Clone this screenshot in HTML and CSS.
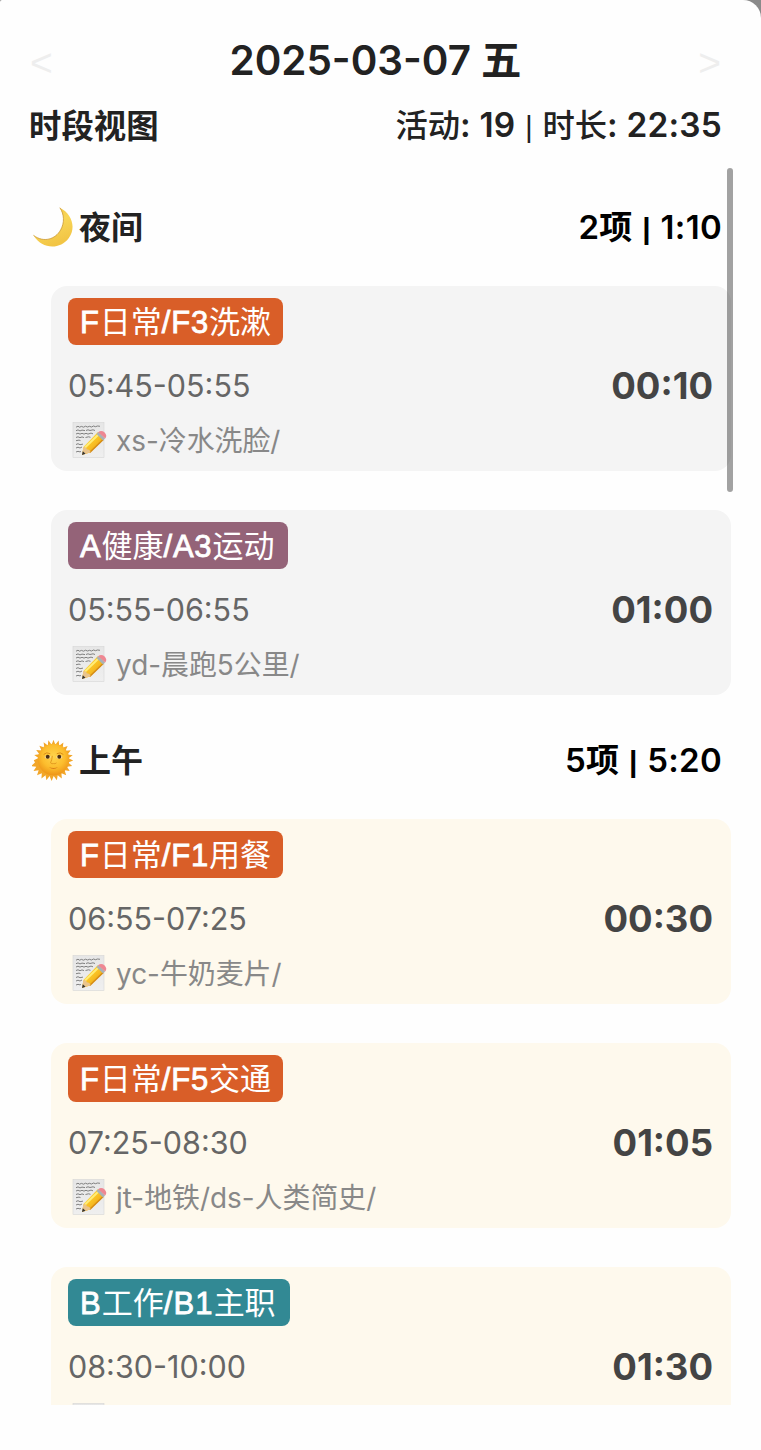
FILE: index.html
```html
<!DOCTYPE html>
<html lang="zh-CN">

<head>
    <meta charset="utf-8" />
    <title>时段视图</title>
    <link rel="stylesheet" href="styles.css">
</head>

<body>
    <svg class="icon-defs">
        <defs>
            <linearGradient id="paperFill" x1="0" y1="0" x2="0" y2="1">
                <stop offset="0" stop-color="#e6e6e6" />
                <stop offset="1" stop-color="#efefef" />
            </linearGradient>
            <linearGradient id="pencilFill" x1="0" y1="0" x2="1" y2="1">
                <stop offset="0" stop-color="#ffdf45" />
                <stop offset="0.5" stop-color="#f9c023" />
                <stop offset="1" stop-color="#d98a12" />
            </linearGradient>
            <linearGradient id="moonFill" x1="0" y1="0" x2="0.4" y2="1">
                <stop offset="0" stop-color="#f0bd3c" />
                <stop offset="0.5" stop-color="#f8d658" />
                <stop offset="1" stop-color="#f2c545" />
            </linearGradient>
            <radialGradient id="sunFill" cx="0.5" cy="0.4" r="0.6">
                <stop offset="0" stop-color="#ffd44c" />
                <stop offset="0.6" stop-color="#fcbd2d" />
                <stop offset="1" stop-color="#ee9518" />
            </radialGradient>
        </defs>
        <symbol id="memo" viewBox="0 0 36 36">
            <rect x="1" y="0.5" width="31" height="35" fill="url(#paperFill)" stroke="#d5d5d5" stroke-width="0.6" />
            <path d="M4 5.200l2-1 1.500 1 2-.8 2 .8 2-1 2 .8 2-.7 2 .7 2-1 2 .7 2-.7 2.500.3M4 8.700l2-.8 2 1 2-.8 3 .5M14 8.500l2-.7 2 .7 3-.7 2 .7M4 12l2-.8 2 .9 2-.8 2 .8 2-.8 2 .8 3-1 2 .7M4 15.500l2-.7 2 .9 2-.8 2 .7M13.500 15.500l3-.7 2 .5M4 18.700l3-.6 1.500.5M4 22.500l2-.8 2 1 3-.6M4 26l2-.8 2 .8 2-1M4 30l2-.7 2 .6 1-.5" fill="none" stroke="#757575" stroke-width="0.9" />
            <path d="M10 33l1.500-8 14.500-15 6.500 6.500-14.500 14z" fill="url(#pencilFill)" />
            <path d="M13 25.500l13.500-13" stroke="#ffed76" stroke-width="2" />
            <path d="M17.700 30.500l13.500-13" stroke="#d58b14" stroke-width="1.500" />
            <path d="M10 33l1.500-8q3.200.2 3.200 2.200 3 0 4 3z" fill="#eac48c" />
            <path d="M10 33l.8-3.700 2.700 2.500z" fill="#333" />
            <path d="M24.500 12l2-2 6.500 6.500-2 2z" fill="#a9b1b7" />
            <path d="M26.200 10.300q2.800-2.800 6.200 0 3.300 3.300.8 6.200z" fill="#ee8792" />
        </symbol>
        <symbol id="moon" viewBox="0 0 44 44">
            <path d="M28.500 1.700C41 8 45.500 22 37.500 33 29 44.500 10.500 45 1.500 30 12 38 24 34 29.300 24.500 33.500 17 33 8.500 28.500 1.700z" fill="url(#moonFill)" />
            <path d="M1.500 30C12 38 24 34 29.300 24.500 33.500 17 33 8.500 28.500 1.700" fill="none" stroke="#c9962f" stroke-width="0.800" />
        </symbol>
        <symbol id="sun" viewBox="-1 0 46 46">
            <path d="M22 .8l2 5.300 3.500-4.400.6 5.600 4.500-3.500-.8 5.600 5.300-2-2.200 5.200 5.600-.6-3.400 4.500 5.500.8-4.500 3.400 5 2.300-5.300 2.200 4.200 3.700-5.600.7 3 4.700-5.500-.8 1.700 5.300-5.100-2.200.4 5.600-4.400-3.500-.9 5.500-3.400-4.500-2.200 5.200-2.200-5.200-3.400 4.500-.9-5.500-4.400 3.500.4-5.600-5.100 2.200 1.700-5.300-5.500.8 3-4.700-5.600-.7 4.200-3.700L.9 22.700l5-2.300L1.400 17l5.500-.8-3.400-4.500 5.600.6-2.200-5.200 5.300 2-.8-5.600 4.500 3.500.6-5.600L20 6.100z" fill="#f2a629" />
            <circle cx="22" cy="22" r="16.800" fill="url(#sunFill)" />
            <path d="M11.500 16.500q3-3 7-.8M25.500 15.700q4-2.200 7 .8" fill="none" stroke="#d98a16" stroke-width="1" />
            <ellipse cx="15.800" cy="19.200" rx="3.200" ry="1.700" fill="#f8dda0" />
            <ellipse cx="28.200" cy="19.200" rx="3.200" ry="1.700" fill="#f8dda0" />
            <circle cx="15.800" cy="19" r="2.100" fill="#4b2d10" />
            <circle cx="28.200" cy="19" r="2.100" fill="#4b2d10" />
            <path d="M20.800 18q-.5 5-2 7.500 1.500 1.500 3.200.8 1.700.7 3.200-.8" fill="none" stroke="#df921c" stroke-width="0.900" />
            <path d="M17 30q5 2 10 0-5 4-10 0z" fill="#da7d18" />
        </symbol>
    </svg>

    <div class="panel">
        <div class="date-bar">
            <span class="arrow">&lt;</span>
            <h1 class="date">2025-03-07 五</h1>
            <span class="arrow">&gt;</span>
        </div>
        <div class="summary">
            <span class="summary-title">时段视图</span>
            <span class="summary-total">活动<b>: 19</b> <span class="bar">|</span> 时长<b>: 22:35</b></span>
        </div>

        <div class="list">
            <div class="scrollbar"></div>

            <div class="section-head">
                <svg class="section-icon"><use href="#moon" /></svg>
                <span class="section-name">夜间</span>
                <span class="section-total">2项 <span class="bar">|</span> 1:10</span>
            </div>
            <div class="card night">
                <span class="tag daily"><b>F</b>日常<b>/F3</b>洗漱</span>
                <div class="time-row">
                    <span class="time">05:45-05:55</span>
                    <span class="duration">00:10</span>
                </div>
                <div class="note"><svg class="note-icon"><use href="#memo" /></svg><span>xs-冷水洗脸/</span></div>
            </div>
            <div class="card night">
                <span class="tag health"><b>A</b>健康<b>/A3</b>运动</span>
                <div class="time-row">
                    <span class="time">05:55-06:55</span>
                    <span class="duration">01:00</span>
                </div>
                <div class="note"><svg class="note-icon"><use href="#memo" /></svg><span>yd-晨跑5公里/</span></div>
            </div>

            <div class="section-head">
                <svg class="section-icon"><use href="#sun" /></svg>
                <span class="section-name">上午</span>
                <span class="section-total">5项 <span class="bar">|</span> 5:20</span>
            </div>
            <div class="card morning">
                <span class="tag daily"><b>F</b>日常<b>/F1</b>用餐</span>
                <div class="time-row">
                    <span class="time">06:55-07:25</span>
                    <span class="duration">00:30</span>
                </div>
                <div class="note"><svg class="note-icon"><use href="#memo" /></svg><span>yc-牛奶麦片/</span></div>
            </div>
            <div class="card morning">
                <span class="tag daily"><b>F</b>日常<b>/F5</b>交通</span>
                <div class="time-row">
                    <span class="time">07:25-08:30</span>
                    <span class="duration">01:05</span>
                </div>
                <div class="note"><svg class="note-icon"><use href="#memo" /></svg><span>jt-地铁/ds-人类简史/</span></div>
            </div>
            <div class="card morning">
                <span class="tag work"><b>B</b>工作<b>/B1</b>主职</span>
                <div class="time-row">
                    <span class="time">08:30-10:00</span>
                    <span class="duration">01:30</span>
                </div>
                <div class="note"><svg class="note-icon"><use href="#memo" /></svg></div>
            </div>
        </div>
    </div>
</body>

</html>
```
FILE: styles.css
```css
* {
    box-sizing: border-box;
}

body {
    margin: 0;
    height: 1450px;
    overflow: hidden;
    background: #8a8a8a;
    font-family: Inter, "Noto Sans CJK SC", sans-serif;
    color: #222;
}

b {
    font-weight: 600;
}

.icon-defs {
    position: absolute;
    width: 0;
    height: 0;
}

.panel {
    height: 1450px;
    padding-top: 36px;
    background: #fefefe;
    border-radius: 2px 18px 0 0;
}

.date-bar {
    display: flex;
    justify-content: space-between;
    align-items: center;
    height: 50px;
    padding: 0 40px 0 30px;
}

.date {
    margin: 0;
    font-size: 40.4px;
    font-weight: 600;
    line-height: 50px;
    white-space: nowrap;
}

.arrow {
    padding-top: 4px;
    font-family: "Liberation Sans", sans-serif;
    font-size: 39px;
    line-height: 50px;
    color: #eee;
}

.summary {
    display: flex;
    justify-content: space-between;
    align-items: center;
    height: 40px;
    margin-top: 17px;
    padding: 0 39px 0 29px;
    white-space: nowrap;
}

.summary-title {
    font-size: 32.4px;
    font-weight: 700;
}

.summary-total {
    font-size: 32.3px;
    font-weight: 500;
}

.summary-total b {
    font-size: 33.4px;
    letter-spacing: 0.2px;
}

.list {
    position: relative;
    height: 1245px;
    margin-top: 17px;
    padding: 2px 30px 0 32px;
    overflow: hidden;
}

.scrollbar {
    position: absolute;
    top: 8px;
    right: 28.5px;
    width: 6px;
    height: 324px;
    border-radius: 3px;
    background: rgba(0, 0, 0, 0.36);
}

.section-head {
    display: flex;
    align-items: center;
    height: 60px;
    margin: 35px 9px 29px 0;
    font-size: 32px;
    font-weight: 600;
}

.card + .section-head {
    margin-top: -4px;
}

.section-icon {
    width: 43px;
    height: 43px;
    margin-right: 4px;
}

.section-name {
    padding-bottom: 4px;
}

.section-total {
    margin-left: auto;
    padding-bottom: 4px;
    color: #000;
    font-size: 33px;
    letter-spacing: 0.3px;
}

.bar {
    margin: 0 1px;
    font-family: "Liberation Sans", sans-serif;
    font-size: 30px;
    line-height: 1;
}

.section-total .bar {
    font-weight: 700;
}

.card {
    height: 185px;
    margin: 0 0 39px 19px;
    padding: 12px 18px 0 17px;
    border-radius: 16px;
}

.night {
    background: #f4f4f4;
}

.morning {
    background: #fef9ed;
}

.tag {
    display: block;
    width: fit-content;
    height: 47px;
    padding: 0 12px;
    border-radius: 8px;
    color: #fff;
    font-size: 31px;
    line-height: 47px;
}

.tag b {
    font-family: "Liberation Sans", sans-serif;
    font-size: 31px;
    font-weight: 400;
    letter-spacing: 0.8px;
    -webkit-text-stroke: 0.8px #fff;
}

.daily {
    background: #d95e28;
}

.health {
    padding-right: 14px;
    background: #946378;
}

.work {
    padding-right: 14px;
    background: #328994;
}

.work b {
    letter-spacing: 1.1px;
}

.time-row {
    display: flex;
    justify-content: space-between;
    align-items: center;
    height: 40px;
    margin-top: 20px;
}

.time {
    font-size: 30.5px;
    color: #666;
}

.duration {
    padding-top: 2px;
    font-size: 36.5px;
    font-weight: 700;
    color: #444;
}

.note {
    display: flex;
    align-items: center;
    height: 40px;
    margin-top: 15px;
    font-size: 27.9px;
    color: #888;
    white-space: nowrap;
}

.note span {
    padding-bottom: 3px;
}

.note-icon {
    width: 36px;
    height: 36px;
    margin: 0 8px 0 4px;
}
```
